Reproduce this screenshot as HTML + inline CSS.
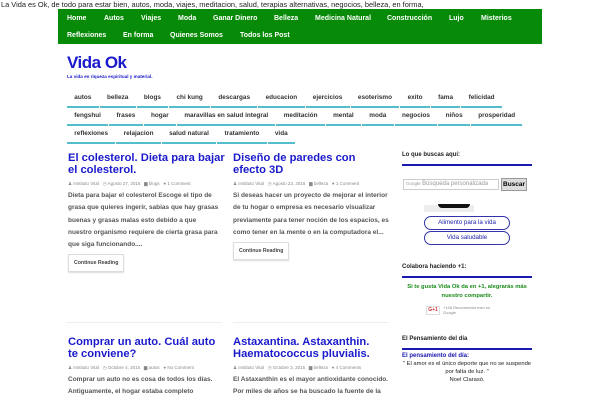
<!DOCTYPE html>
<html><head><meta charset="utf-8"><style>
*{margin:0;padding:0;box-sizing:border-box}
body{width:600px;height:400px;overflow:hidden;background:#fff;font-family:"Liberation Sans",Arial,sans-serif;position:relative}
.a{position:absolute;white-space:nowrap}
#top{left:1px;top:0;font-size:7.4px;color:#222}
#nav{left:58px;top:9px;width:484px;height:35px;background:#078a07}
#nav span{position:absolute;color:#fff;font-size:7px;font-weight:bold}
#t{left:67px;top:53px;font-size:17px;font-weight:bold;color:#1a1acc;letter-spacing:-0.5px}
#tg{left:67px;top:74px;font-size:4.6px;font-weight:bold;color:#1a1acc}
.tr{position:absolute;left:67px;font-size:0}
.tr span{display:inline-block;font-size:6.4px;font-weight:bold;color:#333;padding:0 7.3px;height:13.5px;line-height:8px;border-bottom:2.5px solid #55bccc;margin-right:1px}
.h{font-size:11.2px;font-weight:bold;color:#1a1acc;line-height:12px;white-space:normal;padding-top:1px}
.m{font-size:4.5px;color:#888;line-height:5px;white-space:normal}
.e{font-size:6.5px;font-weight:bold;color:#555;line-height:12.3px;white-space:normal}
.b{border:1px solid #ddd;font-size:5.2px;color:#444;font-weight:bold;padding:5px 5px;box-shadow:0 1px 1px #ddd}
.sh{font-size:6px;font-weight:bold;color:#222}
.ln{height:2px;background:#1a1ab0;width:130px}
</style></head><body>
<div class="a" id="top">La Vida es Ok, de todo para estar bien, autos, moda, viajes, meditacion, salud, terapias alternativas, negocios, belleza, en forma,</div>
<div class="a" id="nav">
<span style="left:9px;top:6px">Home</span><span style="left:46px;top:6px">Autos</span><span style="left:83px;top:6px">Viajes</span><span style="left:120px;top:6px">Moda</span><span style="left:155px;top:6px">Ganar Dinero</span><span style="left:216px;top:6px">Belleza</span><span style="left:257px;top:6px">Medicina Natural</span><span style="left:329px;top:6px">Construcción</span><span style="left:391px;top:6px">Lujo</span><span style="left:423px;top:6px">Misterios</span>
<span style="left:9px;top:23px">Reflexiones</span><span style="left:65px;top:23px">En forma</span><span style="left:112px;top:23px">Quienes Somos</span><span style="left:182px;top:23px">Todos los Post</span>
</div>
<div class="a" id="t">Vida Ok</div>
<div class="a" id="tg">La vida en riqueza espiritual y material.</div>
<div class="tr" style="top:94px"><span>autos</span><span>belleza</span><span>blogs</span><span>chi kung</span><span>descargas</span><span>educacion</span><span>ejercicios</span><span>esoterismo</span><span>exito</span><span>fama</span><span>felicidad</span></div>
<div class="tr" style="top:112px"><span>fengshui</span><span>frases</span><span>hogar</span><span>maravillas en salud integral</span><span>meditación</span><span>mental</span><span>moda</span><span>negocios</span><span>niños</span><span>prosperidad</span></div>
<div class="tr" style="top:130px"><span>reflexiones</span><span>relajacion</span><span>salud natural</span><span>tratamiento</span><span>vida</span></div>

<div class="a" style="left:68px;top:151px;width:158px"><div class="h">El colesterol. Dieta para bajar el colesterol.</div>
<div class="m" style="margin-top:5px;width:150px">♟ Instituto Vital &nbsp; ◷ Agosto 27, 2016 &nbsp; ▆ blogs &nbsp; ● 1 Comment</div>
<div class="e" style="margin-top:4px;width:152px">Dieta para bajar el colesterol Escoge el tipo de grasa que quieres ingerir, sabias que hay grasas buenas y grasas malas esto debido a que nuestro organismo requiere de cierta grasa para que siga funcionando....</div>
<span class="b" style="display:inline-block;margin-top:3px">Continue Reading</span></div>

<div class="a" style="left:233px;top:151px;width:158px"><div class="h">Diseño de paredes con efecto 3D</div>
<div class="m" style="margin-top:5px;width:150px">♟ Instituto Vital &nbsp; ◷ Agosto 23, 2016 &nbsp; ▆ belleza &nbsp; ● 1 Comment</div>
<div class="e" style="margin-top:4px;width:158px">Si deseas hacer un proyecto de mejorar el interior de tu hogar o empresa es necesario visualizar previamente para tener noción de los espacios, es como tener en la mente o en la computadora el...</div>
<span class="b" style="display:inline-block;margin-top:3px">Continue Reading</span></div>

<div class="a" style="left:66px;top:322px;width:156px;height:1px;background:#eee"></div>
<div class="a" style="left:233px;top:322px;width:156px;height:1px;background:#eee"></div>
<div class="a" style="left:68px;top:335px;width:158px"><div class="h">Comprar un auto. Cuál auto te conviene?</div>
<div class="m" style="margin-top:5px;width:150px">♟ Instituto Vital &nbsp; ◷ Octubre 4, 2015 &nbsp; ▆ autos &nbsp; ● No Comment</div>
<div class="e" style="margin-top:4px;width:154px">Comprar un auto no es cosa de todos los días. Antiguamente, el hogar estaba completo</div></div>
<div class="a" style="left:233px;top:335px;width:158px"><div class="h">Astaxantina. Astaxanthin. Haematococcus pluvialis.</div>
<div class="m" style="margin-top:5px;width:150px">♟ Instituto Vital &nbsp; ◷ Octubre 3, 2015 &nbsp; ▆ belleza &nbsp; ● 4 Comments</div>
<div class="e" style="margin-top:4px;width:160px">El Astaxanthin es el mayor antioxidante conocido. Por miles de años se ha buscado la fuente de la</div></div>

<div class="a sh" style="left:402px;top:152px">Lo que buscas aquí:</div>
<div class="a ln" style="left:402px;top:164px"></div>
<div class="a" style="left:403px;top:179px;width:96px;height:11px;border:1px solid #ccc;font-size:6px;color:#999;padding:1px 2px"><span style="font-size:4.5px">Google</span> Búsqueda personalizada</div>
<div class="a" style="left:501px;top:178px;width:26px;height:13px;background:#ddd;border:1px solid #999;font-size:6.5px;font-weight:bold;padding:2px 1px">Buscar</div>
<div class="a" style="left:424px;top:205px;width:50px;height:7px;background:#eee"></div>
<div class="a" style="left:438px;top:204px;width:32px;height:4px;background:#111;border-radius:0 0 8px 8px"></div>
<div class="a" style="left:424px;top:216px;width:86px;height:14px;border:1px solid #33a;border-radius:7px;font-size:6.2px;color:#22a;text-align:center;line-height:12px">Alimento para la vida</div>
<div class="a" style="left:424px;top:231px;width:86px;height:14px;border:1px solid #33a;border-radius:7px;font-size:6.2px;color:#22a;text-align:center;line-height:12px">Vida saludable</div>
<div class="a sh" style="left:402px;top:264px">Colabora haciendo +1:</div>
<div class="a ln" style="left:402px;top:276px"></div>
<div class="a" style="left:402px;top:283px;width:130px;text-align:center;font-size:5.8px;font-weight:bold;color:#1a8a1a;line-height:9px;white-space:normal">Si te gusta Vida Ok da en +1, alegrarás más nuestro compartir.</div>
<div class="a" style="left:426px;top:306px;width:14px;height:9px;border:1px solid #ddd;font-size:5px;color:#c33;font-weight:bold;text-align:center">G+1</div>
<div class="a" style="left:443px;top:305px;font-size:4px;color:#888;line-height:5px">+146 Recomendar esto en<br>Google</div>
<div class="a sh" style="left:402px;top:336px">El Pensamiento del día</div>
<div class="a ln" style="left:402px;top:348px"></div>
<div class="a" style="left:402px;top:353px;font-size:6px;font-weight:bold;color:#1a1ab0">El pensamiento del día:</div>
<div class="a" style="left:402px;top:360px;width:130px;text-align:center;font-size:5.8px;color:#222;line-height:8px;white-space:normal">" El amor es el único deporte que no se suspende por falta de luz. "<br>Noel Clarasó.</div>
</body></html>
